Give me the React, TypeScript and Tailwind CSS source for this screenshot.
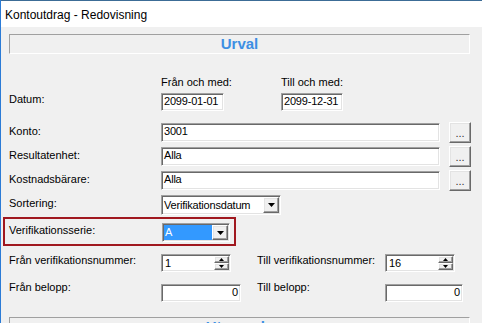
import React from 'react';

// Windows-classic 3D edges
const sunken =
  'bg-white border border-t-[#a0a0a0] border-l-[#a0a0a0] border-b-white border-r-white shadow-[inset_1px_1px_0_#696969,inset_-1px_-1px_0_#e3e3e3]';
const raised =
  'bg-[#f0f0f0] border border-t-white border-l-white border-b-[#696969] border-r-[#696969] shadow-[inset_-1px_-1px_0_#a0a0a0,inset_1px_1px_0_#e3e3e3]';

const DownArrow: React.FC = () => (
  <svg width="7" height="4" viewBox="0 0 7 4">
    <path d="M0 0h7L3.5 4z" fill="#000" />
  </svg>
);

const SectionHeader: React.FC<{ title: string; className?: string }> = ({ title, className }) => (
  <div
    className={`w-[461px] h-[20px] border border-t-[#a0a0a0] border-l-[#a0a0a0] border-b-white border-r-white text-center text-[15px] leading-[17px] font-bold text-[#3d8fe3] ${className ?? ''}`}
  >
    {title}
  </div>
);

const TextBox: React.FC<{ value: string; className?: string; right?: boolean }> = ({ value, className, right }) => (
  <div
    className={`${sunken} h-[18px] px-[2px] pt-[1px] flex items-start whitespace-nowrap overflow-hidden ${right ? 'justify-end' : ''} ${className ?? ''}`}
  >
    <span className="tracking-[-0.2px]">{value}</span>
  </div>
);

const Dropdown: React.FC<{ value: string; className?: string; selected?: boolean }> = ({ value, className, selected }) => (
  <div className={`${sunken} flex items-stretch p-[1px] whitespace-nowrap ${className ?? ''}`}>
    <div className="flex-1 flex items-center min-w-0 overflow-hidden">
      {selected ? (
        <span className="bg-[#3399ff] text-white h-full w-full flex items-center pl-[1px]">{value}</span>
      ) : (
        <span className="pl-[1px] tracking-[-0.2px]">{value}</span>
      )}
    </div>
    <div className={`${raised} w-[16px] flex items-center justify-center`}>
      <DownArrow />
    </div>
  </div>
);

const Spin: React.FC<{ value: string; className?: string }> = ({ value, className }) => (
  <div className={`${sunken} h-[18px] flex items-stretch p-[1px] ${className ?? ''}`}>
    <div className="flex-1 flex items-end pl-[2px]">{value}</div>
    <div className="w-[15px] flex flex-col">
      <div className={`${raised} flex-1 flex items-center justify-center`}>
        <svg width="5" height="3" viewBox="0 0 5 3">
          <path d="M2.5 0L5 3H0z" fill="#000" />
        </svg>
      </div>
      <div className={`${raised} flex-1 flex items-center justify-center`}>
        <svg width="5" height="3" viewBox="0 0 5 3">
          <path d="M0 0h5L2.5 3z" fill="#000" />
        </svg>
      </div>
    </div>
  </div>
);

const EllipsisButton: React.FC = () => (
  <div className={`${raised} ml-[9px] w-[22px] h-[21px] text-center pt-[4px] text-[#333]`}>...</div>
);

const LookupRow: React.FC<{ label: string; value: string; className?: string }> = ({ label, value, className }) => (
  <div className={`flex h-[21px] ${className ?? ''}`}>
    <div className="w-[152px] pt-[3px]">{label}</div>
    <TextBox value={value} className="w-[279px] mt-[1px] h-[19px]" />
    <EllipsisButton />
  </div>
);

export default function App() {
  return (
    <div className="w-[482px] h-[323px] overflow-hidden bg-[#f0f0f0] border-l border-[#2b7bd6] font-['Liberation_Sans',Arial,sans-serif] text-black text-[11px] leading-[13px]">
      {/* Title bar */}
      <div className="h-[27px] bg-white border-t border-[#3c6c96] pl-[4px] pt-[7px] text-[12px] leading-[14px]">
        Kontoutdrag - Redovisning
      </div>

      <div className="pl-[8px]">
        <SectionHeader title="Urval" className="mt-[7px]" />

        {/* Datum */}
        <div className="flex pl-[152px] mt-[22px]">
          <div className="w-[120px]">Från och med:</div>
          <div>Till och med:</div>
        </div>
        <div className="flex mt-[4px]">
          <div className="w-[152px]">Datum:</div>
          <TextBox value="2099-01-01" className="w-[63px]" />
          <TextBox value="2099-12-31" className="w-[62px] ml-[57px]" />
        </div>

        <LookupRow label="Konto:" value="3001" className="mt-[11px]" />
        <LookupRow label="Resultatenhet:" value="Alla" className="mt-[3px]" />
        <LookupRow label="Kostnadsbärare:" value="Alla" className="mt-[3px]" />

        {/* Sortering */}
        <div className="flex h-[21px] mt-[3px]">
          <div className="w-[152px] pt-[3px]">Sortering:</div>
          <Dropdown value="Verifikationsdatum" className="w-[120px] h-[20px] mt-[1px]" />
        </div>

        {/* Highlighted: Verifikationsserie */}
        <div className="flex w-[233px] h-[29px] -ml-[6px] mt-[2px] border-2 border-[#a0181f] pl-[4px]">
          <div className="w-[153px] pt-[5px]">Verifikationsserie:</div>
          <Dropdown value="A" selected className="w-[68px] h-[19px] mt-[4px]" />
        </div>

        {/* Verifikationsnummer */}
        <div className="flex mt-[8px]">
          <div className="w-[152px]">Från verifikationsnummer:</div>
          <Spin value="1" className="w-[70px]" />
          <div className="w-[128px] ml-[26px]">Till verifikationsnummer:</div>
          <Spin value="16" className="w-[70px]" />
        </div>

        {/* Belopp */}
        <div className="flex mt-[9px]">
          <div className="w-[152px]">Från belopp:</div>
          <TextBox value="0" right className="w-[80px] mt-[3px]" />
          <div className="w-[128px] ml-[16px]">Till belopp:</div>
          <TextBox value="0" right className="w-[78px] mt-[3px]" />
        </div>

        <SectionHeader title="Utseende" className="mt-[15px]" />
      </div>
    </div>
  );
}
